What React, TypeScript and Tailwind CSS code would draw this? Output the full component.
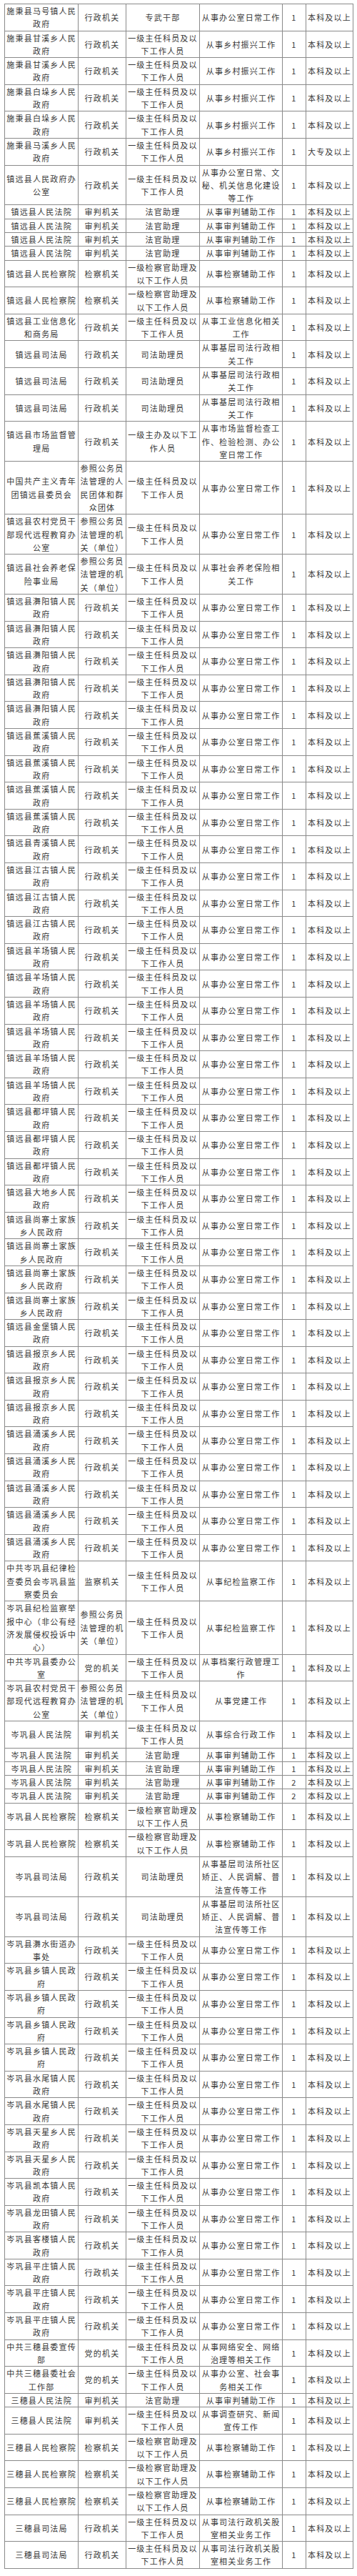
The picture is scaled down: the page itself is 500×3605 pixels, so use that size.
import React from "react";

const XZ = "行政机关";
const KY = "一级主任科员及以下工作人员";
const JC = "一级检察官助理及以下工作人员";
const BGS = "从事办公室日常工作";
const BK = "本科及以上";
const CG = "参照公务员法管理的机关（单位）";

type Row = [string, string, string, string, string, string];

const gov = (name: string, n = 1): Row[] =>
  Array.from({ length: n }, () => [name, XZ, KY, BGS, "1", BK] as Row);

const rep = (row: Row, n: number): Row[] => Array.from({ length: n }, () => row);

const rows: Row[] = [
  ["施秉县马号镇人民政府", XZ, "专武干部", BGS, "1", BK],
  ...rep(["施秉县甘溪乡人民政府", XZ, KY, "从事乡村振兴工作", "1", BK], 2),
  ...rep(["施秉县白垛乡人民政府", XZ, KY, "从事乡村振兴工作", "1", BK], 2),
  ["施秉县马溪乡人民政府", XZ, KY, "从事乡村振兴工作", "1", "大专及以上"],
  ["镇远县人民政府办公室", XZ, KY, "从事办公室日常、文秘、机关信息化建设等工作", "1", BK],
  ...rep(["镇远县人民法院", "审判机关", "法官助理", "从事审判辅助工作", "1", BK], 4),
  ...rep(["镇远县人民检察院", "检察机关", JC, "从事检察辅助工作", "1", BK], 2),
  ["镇远县工业信息化和商务局", XZ, KY, "从事工业信息化相关工作", "1", BK],
  ...rep(["镇远县司法局", XZ, "司法助理员", "从事基层司法行政相关工作", "1", BK], 3),
  ["镇远县市场监督管理局", XZ, "一级主办及以下工作人员", "从事市场监督检查工作、检验检测、办公室日常工作", "1", BK],
  ["中国共产主义青年团镇远县委员会", "参照公务员法管理的人民团体和群众团体", KY, BGS, "1", BK],
  ["镇远县农村党员干部现代远程教育办公室", CG, KY, BGS, "1", BK],
  ["镇远县社会养老保险事业局", CG, KY, "从事社会养老保险相关工作", "1", BK],
  ...gov("镇远县㵲阳镇人民政府", 5),
  ...gov("镇远县蕉溪镇人民政府", 4),
  ...gov("镇远县青溪镇人民政府", 1),
  ...gov("镇远县江古镇人民政府", 3),
  ...gov("镇远县羊场镇人民政府", 6),
  ...gov("镇远县都坪镇人民政府", 3),
  ...gov("镇远县大地乡人民政府", 1),
  ...gov("镇远县尚寨土家族乡人民政府", 4),
  ...gov("镇远县金堡镇人民政府", 1),
  ...gov("镇远县报京乡人民政府", 3),
  ...gov("镇远县涌溪乡人民政府", 5),
  ["中共岑巩县纪律检查委员会岑巩县监察委员会", "监察机关", KY, "从事纪检监察工作", "1", BK],
  ["岑巩县纪检监察举报中心（非公有经济发展侵权投诉中心）", CG, KY, "从事纪检监察工作", "1", BK],
  ["中共岑巩县委办公室", "党的机关", KY, "从事档案行政管理工作", "1", BK],
  ["岑巩县农村党员干部现代远程教育办公室", CG, KY, "从事党建工作", "1", BK],
  ["岑巩县人民法院", "审判机关", KY, "从事综合行政工作", "1", BK],
  ["岑巩县人民法院", "审判机关", "法官助理", "从事审判辅助工作", "1", BK],
  ["岑巩县人民法院", "审判机关", "法官助理", "从事审判辅助工作", "1", BK],
  ["岑巩县人民法院", "审判机关", "法官助理", "从事审判辅助工作", "2", BK],
  ["岑巩县人民法院", "审判机关", "法官助理", "从事审判辅助工作", "2", BK],
  ...rep(["岑巩县人民检察院", "检察机关", JC, "从事检察辅助工作", "1", BK], 2),
  ...rep(["岑巩县司法局", XZ, "司法助理员", "从事基层司法所社区矫正、人民调解、普法宣传等工作", "1", BK], 2),
  ...gov("岑巩县㵲水街道办事处", 1),
  ...gov("岑巩县乡镇人民政府", 4),
  ...gov("岑巩县水尾镇人民政府", 2),
  ...gov("岑巩县天星乡人民政府", 2),
  ...gov("岑巩县凯本镇人民政府", 1),
  ...gov("岑巩县龙田镇人民政府", 1),
  ...gov("岑巩县客楼镇人民政府", 1),
  ...gov("岑巩县平庄镇人民政府", 3),
  ["中共三穗县委宣传部", "党的机关", KY, "从事网络安全、网络治理等相关工作", "1", BK],
  ["中共三穗县委社会工作部", "党的机关", KY, "从事办公室、社会事务相关工作", "1", BK],
  ["三穗县人民法院", "审判机关", "法官助理", "从事审判辅助工作", "1", BK],
  ["三穗县人民法院", "审判机关", KY, "从事调查研究、新闻宣传工作", "1", BK],
  ...rep(["三穗县人民检察院", "检察机关", JC, "从事检察辅助工作", "1", BK], 3),
  ...rep(["三穗县司法局", XZ, KY, "从事司法行政机关股室相关业务工作", "1", BK], 2),
];

export default function App() {
  return (
    <div className="min-h-[3605px] w-[500px] bg-white pt-[5px] pl-[6px]">
      <table className="w-[488.3px] table-fixed border-collapse font-['Noto_Sans_CJK_SC','Noto_Sans',sans-serif] text-[11px] leading-[18.3px] tracking-[1.2px] text-[#383838]">
        <colgroup>
          <col className="w-[103.3px]" />
          <col className="w-[66.4px]" />
          <col className="w-[103.6px]" />
          <col className="w-[115.7px]" />
          <col className="w-[32.7px]" />
          <col className="w-[66.6px]" />
        </colgroup>
        <tbody>
          {rows.map((r, i) => (
            <tr key={i}>
              {r.map((c, j) => (
                <td
                  key={j}
                  className="border border-[#8a8a8a] px-[1px] py-0 text-center align-middle break-all"
                >
                  {c}
                </td>
              ))}
            </tr>
          ))}
        </tbody>
      </table>
    </div>
  );
}
